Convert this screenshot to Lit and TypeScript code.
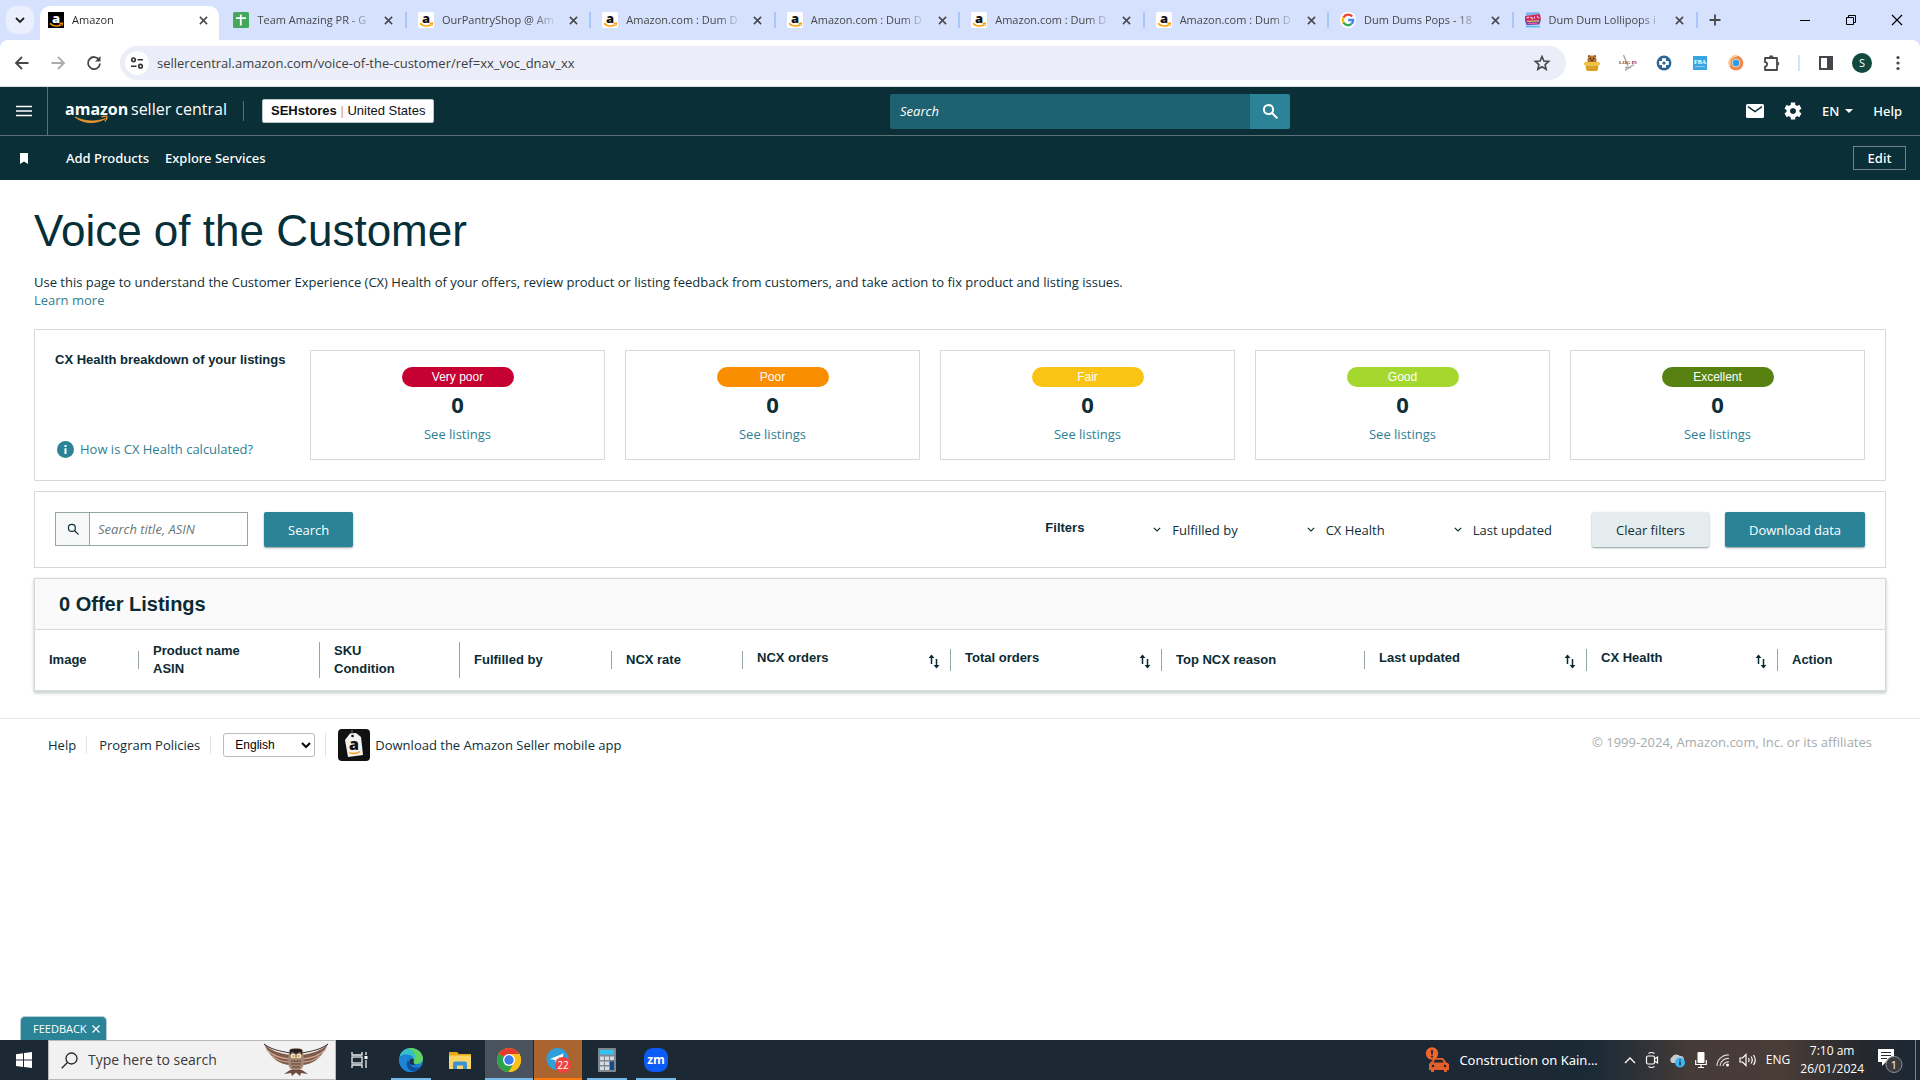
import { LitElement, html, css, svg, nothing } from "lit";
import { customElement, property } from "lit/decorators.js";
import { styleMap } from "lit/directives/style-map.js";

const icon = (w: number, h: number, body: unknown, box = `0 0 ${w} ${h}`) =>
  html`<svg class="icon" width=${w} height=${h} viewBox=${box} aria-hidden="true">${body}</svg>`;

const closeX = (s = 9) =>
  icon(s, s, svg`<path d="M1 1 9 9M9 1 1 9" fill="none" stroke="currentColor" stroke-width="1.7"/>`, "0 0 10 10");

const magnifier = (s: number, w = 2) =>
  icon(s, s, svg`<g fill="none" stroke="currentColor" stroke-width=${w}><circle cx="6.5" cy="6.5" r="4.6"/><path d="M10 10 15.4 15.4"/></g>`, "0 0 16 16");

const amazonFav = (dark: boolean) =>
  icon(16, 16, svg`
    <rect width="16" height="16" rx=${dark ? 0 : 2} fill=${dark ? "#000" : "#fff"}/>
    <text x="8" y="10.5" text-anchor="middle" font-family="Open Sans, sans-serif" font-weight="800" font-size="13" fill=${dark ? "#fff" : "#111"}>a</text>
    <path d="M2 11.4C5.5 14.6 10 14.6 13 12.6" fill="none" stroke="#f90" stroke-width="1.5"/>
    <path d="M11.6 11.4 14.6 11.2 13.8 14.2" fill="none" stroke="#f90" stroke-width="1.1"/>`);

const sheetsFav = icon(16, 16, svg`<rect width="16" height="16" rx="1.5" fill="#43a85b"/><path d="M7.8 2.5V13.5M3 6.2H13" stroke="#fff" stroke-width="1.8"/>`);

const googleFav = icon(16, 16, svg`
  <circle cx="8" cy="8" r="8" fill="#fff"/>
  <g fill="none" stroke-width="2.4">
    <path d="M12.1 4.5A5.2 5.2 0 0 0 3.5 5.4" stroke="#ea4335"/>
    <path d="M3.5 5.4A5.2 5.2 0 0 0 3.5 10.6" stroke="#fbbc05"/>
    <path d="M3.5 10.6A5.2 5.2 0 0 0 11.4 11.9" stroke="#34a853"/>
    <path d="M11.4 11.9A5 5 0 0 0 13.2 8H8.2" stroke="#4285f4"/>
  </g>`);

const candyFav = icon(16, 16, svg`
  <path d="M1 .5 14 0 15 3 1 4Z" fill="#7fb6e8"/>
  <path d="M0 4 15 2 16 8 0 9.5Z" fill="#d8285f"/>
  <path d="M1.500 5.600 4 5.400M5.500 5 8 7M9.500 4.500V6.500M12 4.200 14 6.400" stroke="#f6c6d8" stroke-width="1.100"/>
  <path d="M0 8.800 16 7.600 14.500 12.500 1.500 13.200Z" fill="#6a4fb0"/>
  <path d="M2 9.400 14 8.800" stroke="#f2b541" stroke-width="1.300"/>
  <path d="M3 11.400H12" stroke="#e85c9a" stroke-width="1.200"/>
  <path d="M1 14.600H15" stroke="#5cb7ee" stroke-width="1.600"/>`);

const extensionIcons = [
  icon(16, 16, svg`
    <circle cx="5.200" cy="1.400" r="1.300" fill="#9c5a1f"/><circle cx="10.800" cy="1.400" r="1.300" fill="#9c5a1f"/>
    <path d="M3.500 8V4.500A4.500 4 0 0 1 12.500 4.500V8Z" fill="#b87333"/>
    <circle cx="6.300" cy="3.800" r=".800" fill="#332211"/><circle cx="9.700" cy="3.800" r=".800" fill="#332211"/>
    <path d="M7 5.500H9" stroke="#332211"/>
    <rect x="0" y="7" width="16" height="3.400" rx="1.600" fill="#f0c040"/><path d="M1.400 10.400H14.600L13.800 14.500Q13.500 16 12 16H4Q2.500 16 2.200 14.500Z" fill="#d9a021"/>`),
  icon(16, 16, svg`<path d="M3.5 0 8 11M5 15.4 14 9.500M5 12.500H11" stroke="#a5a5a5" stroke-width="1.3" fill="none"/>
    <text x="8" y="8.500" text-anchor="middle" font-family="Liberation Serif, serif" font-weight="700" font-size="5" fill="#8e1f2b">LOG IN</text>`),
  icon(16, 16, svg`<circle cx="8" cy="8" r="7.4" fill="#2c6494"/><path d="M8 3.2V12.8M3.2 8H12.8" stroke="#fff" stroke-width="4"/><circle cx="8" cy="8" r="1.6" fill="#2c6494"/>`),
  icon(14, 14, svg`<rect width="14" height="14" fill="#39a5e0"/><text x="7" y="7.6" text-anchor="middle" font-family="Liberation Serif, serif" font-weight="700" font-size="6" fill="#fff">FBA</text><path d="M2 10.6H12" stroke="#8fd0f2"/>`, "0 0 14 14"),
  icon(16, 16, svg`<circle cx="8" cy="8" r="7.4" fill="#f08a4b"/><path d="M2 11A7 7 0 0 1 9 1" stroke="#f9c99a" stroke-width="2" fill="none"/><circle cx="8" cy="8" r="4" fill="#cfe8f8"/><circle cx="8" cy="8" r="3.2" fill="#2f9be0"/>`),
  icon(18, 18, svg`<path d="M2 4H14V16H2V12.400A2 2 0 0 0 2 8.200Z" fill="none" stroke="#46484b" stroke-width="1.800" stroke-linejoin="round"/><path d="M6 3.500A2.200 2.200 0 0 1 10.400 3.500ZM14.500 7.500A2.200 2.200 0 0 1 14.500 11.800Z" fill="#46484b"/>`),
];

const sortIcon = icon(12, 15, svg`
  <path d="M3.5 1.4V10M8.5 5V13.4" stroke="currentColor" stroke-width="1.5"/>
  <path d="M.6 4 3.5 .4 6.4 4ZM5.6 11 8.5 14.6 11.4 11Z" fill="currentColor"/>`);

const owl = icon(66, 34, svg`
  <path d="M1 1C8 8 16 10 27 12L28 22C17 22 8 16 1 1Z" fill="#7d5a4a"/>
  <path d="M65 1C58 8 50 10 39 12L38 22C49 22 58 16 65 1Z" fill="#7d5a4a"/>
  <path d="M4 7C11 14 19 15 27 16M9 13C15 18 21 19 27 19M62 7C55 14 47 15 39 16M57 13C51 18 45 19 39 19" stroke="#c9a08a" stroke-width="1.4" fill="none"/>
  <path d="M1 1C9 7 17 8 27 10M65 1C57 7 49 8 39 10" stroke="#3b2a26" stroke-width="1" fill="none"/>
  <path d="M26 8C26 4 40 4 40 8L41 18C41 25 37 28 33 28 29 28 25 25 25 18Z" fill="#a58672"/>
  <path d="M27 12C26 5 28 6 33 6S40 5 39 12L37 9 33 11 29 9Z" fill="#26201f"/>
  <path d="M28 18 38 18M28 21H38M29 24H37" stroke="#5c4236"/>
  <circle cx="30" cy="13" r="2.3" fill="#efe6d5"/><circle cx="36" cy="13" r="2.3" fill="#efe6d5"/>
  <circle cx="30.3" cy="13" r="1.1" fill="#caa21e"/><circle cx="35.7" cy="13" r="1.1" fill="#caa21e"/>
  <path d="M32 14H34L33 17Z" fill="#e0b52e"/>
  <path d="M27 27 21 31 28 30 29 33 33 29.5 37 33 38 30 45 31 39 27Z" fill="#6e4b3f"/>`);

const taskIcons = {
  view: icon(18, 18, svg`<g fill="none" stroke="#e9edf0" stroke-width="1.3"><path d="M1 1V4H11V1M1 17V14H11V17"/><rect x="1" y="6" width="10" height="6"/><path d="M15 1V4M15 9V17"/></g><rect x="13.5" y="5" width="3" height="3" fill="#fff"/>`),
  edge: icon(24, 24, svg`
    <circle cx="12" cy="12" r="12" fill="#1b7fd0"/>
    <path d="M.500 9C3-2.500 19-3 23.300 8 25 13.500 21 16 17.500 16 14.500 16 13.800 14.500 15 13 16.500 8 7 4 .500 9Z" fill="#37bfc9"/>
    <path d="M13 0C21 1 25.500 8 23.400 13 22 16 18 16.400 15.600 15.400 14 14 16 13 15 10.500 18 8 15 3 9 .500Z" fill="#5fd260"/>
    <path d="M0 12C1 6 9 5 13 8.500 9 8.500 7 12 8.500 16 10.500 21 16 22 21 19 17 25 8 25.500 4 21 1 18 0 15 0 12Z" fill="#1d83d4"/>
    <path d="M8.200 13C6.500 18 10 23.500 15 23.500 18 22.600 20.500 20.500 21.400 18.800 16 21 11 19 10.500 14Z" fill="#0d4f9e"/>
    <path d="M15 12.500C14 14 14 16 17 16 13.500 18 10.400 16.500 10.400 13.500 10.400 11 14 9.500 15 12.500Z" fill="#173150"/>`),
  files: icon(22, 18, svg`<path d="M0 1H8L10 3H22V18H0Z" fill="#e9a914"/><path d="M0 4.500H22V18H0Z" fill="#fbd667"/><path d="M4 18V12.500A2 2 0 0 1 6 10.500H16A2 2 0 0 1 18 12.500V18H14V14.500H8V18Z" fill="#3b93d6"/>`),
  chrome: icon(24, 24, svg`
    <circle cx="12" cy="12" r="12" fill="#fbc116"/>
    <path d="M12 12 1.600 6A12 12 0 0 1 22.400 6H12Z" fill="#e33b2e"/>
    <path d="M12 12 1.600 6A12 12 0 0 0 11.600 24L17.200 15Z" fill="#2ba24c"/>
    <path d="M12 6H22.400A12 12 0 0 1 11.600 24L17.200 15Z" fill="#fbc116"/>
    <circle cx="12" cy="12" r="6" fill="#fff"/><circle cx="12" cy="12" r="4.700" fill="#3b7ded"/>`),
  telegram: icon(26, 26, svg`
    <circle cx="12.500" cy="12" r="11" fill="#2da0dc"/>
    <path d="M5 12 18.500 6.500 16.500 17.500 12.500 14.500 10.500 16.500 10 13Z" fill="#fff"/><path d="M10 13 16 8.500 11.500 14 10.500 16.500Z" fill="#b9d9ec"/>
    <circle cx="18" cy="18" r="8" fill="#f0423e"/>
    <text x="18" y="21.600" text-anchor="middle" font-family="Open Sans, sans-serif" font-size="10" fill="#fff">22</text>`),
  calc: icon(18, 24, svg`
    <rect width="18" height="24" rx="1" fill="#7d8890"/><rect x="2" y="2" width="14" height="4.500" fill="#35c3f3"/>
    <g fill="#d6dbdf"><path d="M2 8.500h4v3.600H2zM7 8.500h4v3.600H7zM12 8.500h4v3.600h-4zM2 13.400h4V17H2zM7 13.400h4V17H7zM2 18.400h4V22H2zM7 18.400h4V22H7z"/></g><path d="M12 13.400h4V22h-4z" fill="#174a8c"/>`),
  zoom: icon(24, 24, svg`<rect width="24" height="24" rx="9" fill="#0b5cf5"/><text x="12" y="16" text-anchor="middle" font-family="Open Sans, sans-serif" font-weight="700" font-size="12" fill="#fff">zm</text>`),
};

const tray = {
  chevron: icon(12, 8, svg`<path d="M1 7 6 2 11 7" fill="none" stroke="#fff" stroke-width="1.300"/>`),
  meet: icon(14, 18, svg`<g fill="none" stroke="#fff" stroke-width="1.200"><rect x="1.500" y="5" width="8" height="8" rx="1.500"/><path d="M9.500 8 12.500 6V12L9.500 10M3.500 2.500Q6.500.500 9.500 2.500M3.500 15.500Q6.500 17.500 9.500 15.500"/></g>`),
  cloud: icon(18, 16, svg`<path d="M4 11A3.500 3.500 0 0 1 4 5 5 5 0 0 1 12 4 3.500 3.500 0 0 1 13 11Z" fill="#c8cbce"/><circle cx="12" cy="10.500" r="5" fill="#3fb5f2"/><path d="M12 7.400V8.700M12 9.800V13.400" stroke="#123" stroke-width="1.400"/>`),
  mic: icon(12, 18, svg`<rect x="2.500" y="1" width="7" height="11" rx="1" fill="#fff"/><path d="M.700 9V13.500H11.300V9M6 13.500V16.500M3 16.500H9" fill="none" stroke="#fff" stroke-width="1.200"/>`),
  wifi: icon(14, 14, svg`<g fill="none" stroke="#d6d6d6" stroke-width="1.200"><path d="M1 13A11 11 0 0 1 13 2M4 13A8 8 0 0 1 13 5.500M7 13A5 5 0 0 1 13 9"/></g><circle cx="11.500" cy="12" r="1.500" fill="#fff"/>`),
  speaker: icon(18, 14, svg`<g fill="none" stroke="#fff" stroke-width="1.200"><path d="M1 5H3.500L7 1.500V12.500L3.500 9H1ZM9.500 5Q11 7 9.500 9M12 3.500Q14.500 7 12 10.500M14.500 2Q18 7 14.500 12"/></g>`),
};

interface Health { label: string; color: string; count: number }
interface Column { lines: string[]; width: number; sortable?: boolean }

const uiFont = css`"Open Sans", "Noto Sans", sans-serif`;

const shared = css`
  * { box-sizing: border-box; }
  .icon { display: block; flex: none; overflow: visible; }
  button { font: inherit; color: inherit; background: none; border: 0; padding: 0; cursor: pointer; }
  input { font: inherit; border: 0; outline: 0; min-width: 0; }
  a { text-decoration: none; color: inherit; }
`;

@customElement("browser-chrome")
export class BrowserChrome extends LitElement {
  static styles = [shared, css`
    :host { display: block; font: 11px/16px ${uiFont}; color: #45474a; background: #d6e2fd; }
    .strip { display: flex; height: 40px; padding-left: 6px; }
    .menu { width: 28px; height: 28px; margin-top: 6px; border-radius: 10px; background: #e9effd; display: grid; place-items: center; color: #1f1f1f; }
    .tabs { display: grid; grid-auto-flow: column; grid-auto-columns: minmax(0, 1fr); flex: 0 1 1660px; min-width: 0; margin-left: 4px; }
    .tab { display: flex; align-items: center; gap: 8px; padding: 0 10px 6px 11px; margin-top: 6px; }
    .tab::after { content: ""; width: 2px; height: 16px; background: #a8c7fa; margin: 0 -10px 0 0; }
    .tab.active::after { display: none; }
    .tab.active { background: #fff; border-radius: 10px 10px 0 0; margin-left: 2px; margin-right: 3px; padding-right: 8px; padding-left: 8px; }
    .title { flex: 1; min-width: 0; text-align: left; white-space: nowrap; overflow: hidden; mask-image: linear-gradient(to right, #000 calc(100% - 24px), transparent); }
    .active .title { color: #2b2d30; }
    .close { width: 16px; height: 16px; display: grid; place-items: center; }
    .new { margin: 0 0 0 11px; }
    .window { margin-left: auto; display: flex; align-items: center; gap: 36px; padding-right: 18px; color: #000; }
    .bar { display: flex; align-items: center; height: 47px; background: #fff; border-bottom: 1px solid #dadce0; border-radius: 8px 8px 0 0; padding: 0 4px 0 14px; }
    .nav { display: flex; gap: 20px; margin-right: 18px; }
    .nav .off { color: #a9abae; }
    .omni { flex: 1; display: flex; align-items: center; height: 34px; border-radius: 17px; background: #ebeef8; padding: 0 16px 0 5px; }
    .info { width: 24px; height: 24px; border-radius: 12px; background: #fff; display: grid; place-items: center; }
    .url { flex: 1; background: none; font-size: 13px; color: #3c4043; padding: 0 8px; }
    .exts { display: flex; margin-left: 8px; }
    .exts.own { margin-left: 0; }
    .exts button { width: 36px; height: 24px; display: grid; place-items: center; }
    .split { width: 2px; height: 16px; background: #d3e3fd; margin: 0 8px; }
    .avatar { width: 20px; height: 20px; border-radius: 10px; background: #12493f; color: #fff; display: grid; place-items: center; }
  `];

  private tabs = [
    { title: "Amazon", fav: amazonFav(true) },
    { title: "Team Amazing PR - G", fav: sheetsFav },
    { title: "OurPantryShop @ Am", fav: amazonFav(false) },
    { title: "Amazon.com : Dum D", fav: amazonFav(false) },
    { title: "Amazon.com : Dum D", fav: amazonFav(false) },
    { title: "Amazon.com : Dum D", fav: amazonFav(false) },
    { title: "Amazon.com : Dum D", fav: amazonFav(false) },
    { title: "Dum Dums Pops - 18", fav: googleFav },
    { title: "Dum Dum Lollipops i", fav: candyFav },
  ];

  render() {
    return html`
      <div class="strip">
        <button class="menu" aria-label="Search tabs">${icon(10, 6, svg`<path d="M1 1 5 5 9 1" fill="none" stroke="currentColor" stroke-width="1.800"/>`)}</button>
        <div class="tabs">
          ${this.tabs.map((t, i) => html`
            <div class="tab ${i === 0 ? "active" : ""}">
              ${t.fav}<button class="title">${t.title}</button>
              <button class="close" aria-label="Close tab">${closeX()}</button>
            </div>`)}
        </div>
        <button class="new" aria-label="New tab">${icon(12, 12, svg`<path d="M6 .500V11.500M.500 6H11.500" stroke="currentColor" stroke-width="1.800"/>`)}</button>
        <div class="window">
          <button aria-label="Minimize">${icon(10, 10, svg`<path d="M0 5.500H10" stroke="currentColor"/>`)}</button>
          <button aria-label="Restore">${icon(10, 10, svg`<path d="M.500 2.500H7.500V9.500H.500ZM2.500 2.500V.500H9.500V7.500H7.500" fill="none" stroke="currentColor"/>`)}</button>
          <button aria-label="Close window">${icon(10, 10, svg`<path d="M0 0 10 10M10 0 0 10" stroke="currentColor" stroke-width="1.200"/>`)}</button>
        </div>
      </div>
      <div class="bar">
        <div class="nav">
          <button aria-label="Back">${icon(16, 16, svg`<path d="M8 2 2 8 8 14M2 8H14.500" fill="none" stroke="currentColor" stroke-width="1.800"/>`)}</button>
          <button class="off" aria-label="Forward">${icon(16, 16, svg`<path d="M8 2 14 8 8 14M14 8H1.500" fill="none" stroke="currentColor" stroke-width="1.800"/>`)}</button>
          <button aria-label="Reload">${icon(16, 16, svg`<path d="M13.200 5A6 6 0 1 0 14 8.500" fill="none" stroke="currentColor" stroke-width="1.800"/><path d="M14.500 1V6.500H9Z" fill="currentColor"/>`)}</button>
        </div>
        <div class="omni">
          <button class="info" aria-label="Site information">${icon(14, 12, svg`<g fill="none" stroke="#303234" stroke-width="1.600"><circle cx="3.500" cy="2.800" r="1.800"/><path d="M7.500 2.800H13M1 9.200H6.500"/><circle cx="10.500" cy="9.200" r="1.800"/></g>`)}</button>
          <input class="url" aria-label="Address" .value=${"sellercentral.amazon.com/voice-of-the-customer/ref=xx_voc_dnav_xx"} />
          <button aria-label="Bookmark">${icon(16, 16, svg`<path d="M8 1.500 9.900 6 14.700 6.400 11.100 9.600 12.200 14.300 8 11.800 3.800 14.300 4.900 9.600 1.300 6.400 6.100 6Z" fill="none" stroke="currentColor" stroke-width="1.600"/>`)}</button>
        </div>
        <div class="exts">${extensionIcons.map((e) => html`<button aria-label="Extension">${e}</button>`)}</div>
        <div class="split"></div>
        <div class="exts own">
          <button aria-label="Side panel">${icon(14, 14, svg`<path d="M1 1H13V13H1Z" fill="none" stroke="currentColor" stroke-width="2"/><path d="M8 1H13V13H8Z" fill="currentColor"/>`)}</button>
          <button aria-label="Profile"><span class="avatar">S</span></button>
          <button aria-label="Menu">${icon(4, 16, svg`<g fill="currentColor"><circle cx="2" cy="2.500" r="1.600"/><circle cx="2" cy="8" r="1.600"/><circle cx="2" cy="13.500" r="1.600"/></g>`)}</button>
        </div>
      </div>`;
  }
}

@customElement("seller-nav")
export class SellerNav extends LitElement {
  static styles = [shared, css`
    :host { display: block; background: #0a2f36; color: #fff; font: 500 13px/18px "Noto Sans", sans-serif; }
    .row { display: grid; grid-template-columns: minmax(0, 89fr) minmax(200px, 400px) minmax(0, 63fr); align-items: center; height: 49px; border-bottom: 1px solid #5b7175; }
    .left, .right { display: flex; align-items: center; }
    .burger { width: 48px; height: 48px; border-right: 1px solid #5b7175; display: grid; place-items: center; }
    .logo { display: block; margin-left: 18px; }
    .rule { width: 1px; height: 20px; margin: 0 18px 0 17px; background: #5b7175; }
    .store { background: #fff; color: #0f1111; border: 1px solid #b9c4c6; border-radius: 2px; height: 24px; padding: 0 8px; font: 13px/20px "Liberation Sans", sans-serif; white-space: nowrap; }
    .bar { color: #d9a066; }
    .search { display: flex; height: 35px; }
    .field { flex: 1; background: #1e6170; color: #fff; padding: 0 10px; font: italic 13px/18px ${uiFont}; border-radius: 2px 0 0 2px; }
    .field::placeholder { color: #fff; opacity: 1; }
    .go { width: 40px; background: #2a8397; border-radius: 0 2px 2px 0; display: grid; place-items: center; }
    .right { justify-content: flex-end; gap: 20px; padding-right: 18px; }
    .lang { display: flex; align-items: center; gap: 6px; }
    .sub { display: flex; align-items: center; height: 44px; padding: 0 14px 0 20px; }
    .links { display: flex; gap: 16px; margin-left: 38px; }
    .edit { margin-left: auto; width: 53px; height: 24px; border: 1px solid #6f8286; }
  `];

  render() {
    return html`
      <div class="row">
        <div class="left">
          <button class="burger" aria-label="Menu">${icon(16, 12, svg`<path d="M0 1.500H16M0 6H16M0 10.500H16" stroke="#fff" stroke-width="1.600"/>`)}</button>
          <a class="logo" href="#" aria-label="amazon seller central">${icon(160, 26, svg`
            <text x="-1" y="17" font-family="Open Sans, sans-serif" font-weight="700" font-size="16" fill="#fff">amazon</text>
            <text x="65" y="17" font-family="Open Sans, sans-serif" font-weight="400" font-size="16" fill="#fff">seller central</text>
            <path d="M9 19C18 26.500 31 26 39.500 20.500 31 24 19 24 9 19Z" fill="#f0982e" stroke="#f0982e" stroke-width=".800"/>
            <path d="M35.500 18.800C38 18 40.500 18 41 18.600 41.300 20 40.300 22.200 38.800 23.600" fill="none" stroke="#f0982e" stroke-width="1.300"/>`)}</a>
          <span class="rule"></span>
          <button class="store"><b>SEHstores</b> <span class="bar">|</span> United States</button>
        </div>
        <form class="search" @submit=${(e: Event) => e.preventDefault()}>
          <input class="field" placeholder="Search" aria-label="Search" />
          <button class="go" aria-label="Search">${magnifier(16, 2)}</button>
        </form>
        <div class="right">
          <a href="#" aria-label="Messages">${icon(18, 14, svg`<rect width="18" height="14" rx="1.500" fill="#fff"/><path d="M2 2.600 9 7.600 16 2.600" fill="none" stroke="#0a2f36" stroke-width="1.500"/>`)}</a>
          <a href="#" aria-label="Settings">${icon(18, 18, svg`
            <circle cx="9" cy="9" r="4.600" fill="none" stroke="#fff" stroke-width="4"/>
            <g stroke="#fff" stroke-width="4.400"><path d="M9 .500V4M9 14V17.500M1.600 4.800 4.700 6.500M13.300 11.500 16.400 13.200M1.600 13.200 4.700 11.500M13.300 6.500 16.400 4.800"/></g><circle cx="9" cy="9" r="2.800" fill="#0a2f36"/>`)}</a>
          <button class="lang">EN ${icon(8, 4, svg`<path d="M0 0H8L4 4Z" fill="#fff"/>`)}</button>
          <a href="#">Help</a>
        </div>
      </div>
      <div class="sub">
        ${icon(8, 11, svg`<path d="M0 0H8V11L4 8.500 0 11Z" fill="#fff"/>`)}
        <nav class="links"><a href="#">Add Products</a><a href="#">Explore Services</a></nav>
        <button class="edit">Edit</button>
      </div>`;
  }
}

@customElement("health-card")
export class HealthCard extends LitElement {
  static styles = [shared, css`
    :host { display: flex; flex-direction: column; align-items: center; border: 1px solid #d5dbdb; padding: 16px 0 15px; }
    .pill { width: 112px; border-radius: 10px; color: #fff; text-align: center; font: 12px/20px "Liberation Sans", sans-serif; }
    .count { font-size: 22px; line-height: 24px; font-weight: 700; margin: 5px 0 8px; }
    .see { color: #2f7f93; line-height: 20px; }
  `];
  @property({ attribute: false }) data!: Health;

  render() {
    return html`
      <span class="pill" style=${styleMap({ background: this.data.color })}>${this.data.label}</span>
      <span class="count">${this.data.count}</span>
      <a class="see" href="#">See listings</a>`;
  }
}

@customElement("voice-page")
export class VoicePage extends LitElement {
  static styles = [shared, css`
    :host { display: block; font: 13px/18px ${uiFont}; color: #0f2f38; }
    .body { padding: 0 34px; }
    h1 { margin: 0; padding: 24px 0 15px; font: 400 44px/54px "Liberation Sans", sans-serif; color: #062f38; }
    p { margin: 0; }
    .link { color: #2f7f93; }
    .panel { border: 1px solid #d5dbdb; padding: 20px; margin-top: 10px; }
    .breakdown { display: flex; margin-top: 20px; }
    .side { flex: 0 0 255px; display: flex; flex-direction: column; justify-content: space-between; padding-bottom: 2px; }
    h2 { margin: 0; font: 700 13px/20px "Liberation Sans", sans-serif; color: #0b2b34; }
    .how { display: flex; align-items: center; gap: 6px; padding-left: 2px; }
    .cards { flex: 1; display: grid; grid-template-columns: repeat(5, minmax(0, 1fr)); gap: 20px; }
    .tools { display: flex; align-items: center; }
    .find { display: flex; gap: 16px; align-items: flex-start; height: 35px; }
    .box { display: flex; width: 193px; height: 34px; border: 1px solid #95a5a6; }
    .lens { width: 34px; display: grid; place-items: center; background: #f7f8f8; border-right: 1px solid #95a5a6; }
    .asin { flex: 1; padding: 0 8px; font-style: italic; background: #fff; }
    .asin::placeholder { color: #687778; opacity: 1; }
    .btn { height: 35px; border-radius: 2px; padding: 0 24px; background: #2a8397; color: #fff; font-weight: 500; box-shadow: 0 1px 2px #8a9a9d; white-space: nowrap; }
    .btn.light { background: #e5ecee; color: #0f2f38; font-weight: 400; }
    .filters { margin-left: auto; display: flex; align-items: center; gap: 69px; }
    .filters h2 { padding-bottom: 3px; }
    .drop { display: flex; align-items: center; gap: 11px; }
    .actions { display: flex; gap: 16px; margin-left: 40px; }
    .listing { border: 1px solid #d5dbdb; border-bottom-width: 2px; margin-top: 10px; box-shadow: 0 1px 3px #b8c0c0; }
    .listing h2 { font-size: 20px; line-height: 24px; padding: 13px 24px; background: #fafafa; border-bottom: 1px solid #d5dbdb; }
    table { width: 100%; table-layout: fixed; border-collapse: collapse; }
    th { height: 60px; padding: 0; text-align: left; vertical-align: middle; font: 700 13px/18px "Liberation Sans", sans-serif; color: #0b2b34; }
    .cell { display: flex; justify-content: space-between; padding: 0 10px 0 14px; border-right: 1px solid #95a5a6; }
    .cell.sort { height: 22px; }
    .sort button { padding-top: 2px; height: 22px; }
    th:last-child .cell { border-right: 0; }
    footer { margin-top: 26px; border-top: 1px solid #e7e9e9; padding: 10px 48px; display: flex; align-items: center; }
    .item { padding-right: 10px; border-right: 1px solid #e2e5e5; margin-right: 12px; white-space: nowrap; }
    select { width: 92px; height: 24px; padding: 0 0 0 7px; border: 1px solid #b9bdbd; border-radius: 3px; background: #fff; color: #000; font: 12px "Liberation Sans", sans-serif; }
    .app { display: flex; align-items: center; gap: 5px; }
    .copy { margin-left: auto; color: #a6abab; padding-bottom: 6px; }
  `];

  private health: Health[] = [
    { label: "Very poor", color: "#c60032", count: 0 },
    { label: "Poor", color: "#f98e00", count: 0 },
    { label: "Fair", color: "#f9c414", count: 0 },
    { label: "Good", color: "#a5d82f", count: 0 },
    { label: "Excellent", color: "#578211", count: 0 },
  ];

  private columns: Column[] = [
    { lines: ["Image"], width: 104 },
    { lines: ["Product name", "ASIN"], width: 181 },
    { lines: ["SKU", "Condition"], width: 140 },
    { lines: ["Fulfilled by"], width: 152 },
    { lines: ["NCX rate"], width: 131 },
    { lines: ["NCX orders"], width: 208, sortable: true },
    { lines: ["Total orders"], width: 211, sortable: true },
    { lines: ["Top NCX reason"], width: 203 },
    { lines: ["Last updated"], width: 222, sortable: true },
    { lines: ["CX Health"], width: 191, sortable: true },
    { lines: ["Action"], width: 107 },
  ];

  render() {
    const total = this.columns.reduce((sum, c) => sum + c.width, 0);
    return html`
      <div class="body">
        <h1>Voice of the Customer</h1>
        <p>Use this page to understand the Customer Experience (CX) Health of your offers, review product or listing feedback from customers, and take action to fix product and listing issues.</p>
        <a class="link" href="#">Learn more</a>

        <section class="panel breakdown">
          <div class="side">
            <h2>CX Health breakdown of your listings</h2>
            <a class="link how" href="#">${icon(17, 17, svg`<circle cx="8.500" cy="8.500" r="8.500" fill="#2a8397"/><path d="M8.500 4V6M8.500 7.300V13" stroke="#fff" stroke-width="2"/>`)}How is CX Health calculated?</a>
          </div>
          <div class="cards">${this.health.map((h) => html`<health-card .data=${h}></health-card>`)}</div>
        </section>

        <section class="panel tools">
          <form class="find" @submit=${(e: Event) => e.preventDefault()}>
            <div class="box">
              <label class="lens" for="asin" aria-label="Search listings">${magnifier(12, 1.6)}</label>
              <input class="asin" id="asin" placeholder="Search title, ASIN" />
            </div>
            <button class="btn">Search</button>
          </form>
          <div class="filters">
            <h2>Filters</h2>
            ${["Fulfilled by", "CX Health", "Last updated"].map((f) => html`
              <button class="drop">${icon(8, 5, svg`<path d="M.800.800 4 4 7.200.800" fill="none" stroke="#0f2f38" stroke-width="1.200"/>`)}${f}</button>`)}
          </div>
          <div class="actions">
            <button class="btn light">Clear filters</button>
            <button class="btn">Download data</button>
          </div>
        </section>

        <section class="listing">
          <h2>0 Offer Listings</h2>
          <table>
            <colgroup>${this.columns.map((c) => html`<col style=${styleMap({ width: `${(c.width / total) * 100}%` })} />`)}</colgroup>
            <thead><tr>${this.columns.map((c) => html`
              <th scope="col"><div class="cell ${c.sortable ? "sort" : ""}">
                <span>${c.lines.map((l, i) => html`${i ? html`<br />` : nothing}${l}`)}</span>
                ${c.sortable ? html`<button aria-label="Sort by ${c.lines[0]}">${sortIcon}</button>` : nothing}
              </div></th>`)}</tr></thead>
          </table>
        </section>
      </div>

      <footer>
        <a class="item" href="#">Help</a>
        <a class="item" href="#">Program Policies</a>
        <span class="item"><select aria-label="Language"><option>English</option></select></span>
        <a class="app" href="#">${icon(32, 32, svg`
          <rect width="32" height="32" rx="4" fill="#111"/>
          <path d="M14 1V5" stroke="#777"/>
          <path d="M7 11 12 4.500 18 4 23 8 25 26 10 28Z" fill="#f3f3f3"/><circle cx="14.500" cy="7" r="1.300" fill="#111"/>
          <text x="16" y="21" text-anchor="middle" font-family="Open Sans, sans-serif" font-weight="800" font-size="16" fill="#111">a</text>
          <path d="M11.500 23.600Q17 26 22 22.500" stroke="#f90" stroke-width="1.500" fill="none"/>`)}Download the Amazon Seller mobile app</a>
        <span class="copy">© 1999-2024, Amazon.com, Inc. or its affiliates</span>
      </footer>`;
  }
}

@customElement("task-bar")
export class TaskBar extends LitElement {
  static styles = [shared, css`
    :host { display: flex; height: 40px; color: #fff; font: 14px/20px ${uiFont}; background: linear-gradient(to right, #1c2834 0 80%, #1b2a37 83%, #453b38 88%, #483c37 93%, #26282e 97%, #1c2834); }
    .start { width: 48px; display: grid; place-items: center; }
    .find { display: flex; align-items: center; width: 288px; background: #f1f1f1; border: 1px solid #b9b9b9; padding: 0 6px 0 12px; color: #1b1b1b; }
    .field { flex: 1; background: none; padding: 0 10px; }
    .field::placeholder { color: #3a3a3a; opacity: 1; }
    .apps { display: flex; gap: 1px; }
    .app { width: 48px; display: grid; place-items: center; border-bottom: 2px solid transparent; border-top: 2px solid transparent; }
    .app:first-child { margin-right: 2px; }
    .open { background: linear-gradient(#76b9ed, #76b9ed) center bottom / 40px 2px no-repeat border-box; }
    .active { background: #4a525e; border-bottom-color: #76b9ed; }
    .alert { background: #a9642f; border-bottom-color: #ff7a0a; }
    .active, .alert { border-top: 0; padding-top: 2px; }
    .tray { margin-left: auto; display: flex; align-items: center; white-space: nowrap; }
    .news { display: flex; align-items: center; gap: 8px; margin-right: 26px; font: 13px/20px "Noto Sans", sans-serif; }
    .icons { display: flex; align-items: center; gap: 9px; font-size: 12px; }
    .clock { text-align: center; font-size: 12px; line-height: 18px; margin: 0 13px 0 10px; }
    .peek { width: 5px; height: 40px; border-left: 1px solid #7b8086; margin-left: 12px; }
  `];

  private apps = [
    { name: "Task view", art: taskIcons.view, state: "" },
    { name: "Microsoft Edge", art: taskIcons.edge, state: "open" },
    { name: "File Explorer", art: taskIcons.files, state: "" },
    { name: "Google Chrome", art: taskIcons.chrome, state: "active" },
    { name: "Telegram", art: taskIcons.telegram, state: "alert" },
    { name: "Calculator", art: taskIcons.calc, state: "open" },
    { name: "Zoom", art: taskIcons.zoom, state: "open" },
  ];

  render() {
    return html`
      <button class="start" aria-label="Start">${icon(16, 16, svg`<path d="M0 2.200 7 1.200V7.600H0ZM8 1 16 0V7.600H8ZM0 8.500H7V14.900L0 13.900ZM8 8.500H16V16L8 15Z" fill="#fff"/>`)}</button>
      <div class="find">
        ${icon(17, 17, svg`<g fill="none" stroke="#222" stroke-width="1.300"><circle cx="10.500" cy="6.500" r="5.500"/><path d="M6.500 10.500.700 16.300"/></g>`)}
        <input class="field" placeholder="Type here to search" aria-label="Type here to search" />
        ${owl}
      </div>
      <div class="apps">${this.apps.map((a) => html`<button class="app ${a.state}" aria-label=${a.name}>${a.art}</button>`)}</div>
      <div class="tray">
        <button class="news">${icon(26, 26, svg`
          <path d="M6 15 9 11H18L21 15 24 17V23H22V25H19V23H9V25H6V23H4V17Z" fill="#e4602b"/><path d="M8.500 15.500 10 12.800H17L18.800 15.500Z" fill="#1c2834"/>
          <circle cx="7" cy="6.500" r="6.200" fill="#f0652e"/><path d="M7 3V7.500M7 8.800V10.600" stroke="#1c2834" stroke-width="1.800"/>
          <circle cx="8" cy="19" r="1.300" fill="#1c2834"/><circle cx="20" cy="19" r="1.300" fill="#1c2834"/>`)}Construction on Kain...</button>
        <div class="icons">
          ${tray.chevron}${tray.meet}${tray.cloud}${tray.mic}${tray.wifi}${tray.speaker}<span>ENG</span>
        </div>
        <div class="clock">7:10 am<br />26/01/2024</div>
        <button aria-label="Notifications">${icon(26, 26, svg`
          <path d="M1 2H17V15H9L5 19V15H1Z" fill="#fff"/><path d="M4 5.500H14M4 8.500H14M4 11.500H10" stroke="#2a2c31" stroke-width="1.200"/>
          <circle cx="17" cy="17.500" r="8" fill="#3a3c41" stroke="#8b8e92"/>
          <text x="17" y="21.500" text-anchor="middle" font-family="Open Sans, sans-serif" font-size="11" fill="#fff">1</text>`)}</button>
        <span class="peek"></span>
      </div>`;
  }
}

@customElement("app-root")
export class AppRoot extends LitElement {
  static styles = [shared, css`
    :host { display: flex; flex-direction: column; min-height: 100vh; background: #fff; }
    .page { flex: 1; }
    .dock { position: relative; }
    .feedback { position: absolute; left: 20px; bottom: 100%; height: 24px; display: flex; align-items: center; gap: 5px; padding: 0 6px 0 12px; color: #fff; background: #2a8397; border: 1px solid #b5cdd2; border-bottom: 0; border-radius: 5px 5px 0 0; font: 500 11px/16px ${uiFont}; }
  `];

  render() {
    return html`
      <browser-chrome></browser-chrome>
      <seller-nav></seller-nav>
      <voice-page class="page"></voice-page>
      <div class="dock">
        <button class="feedback">FEEDBACK ${icon(8, 8, svg`<path d="M.500.500 7.500 7.500M7.500.500.500 7.500" stroke="#fff" stroke-width="1.200"/>`)}</button>
        <task-bar></task-bar>
      </div>`;
  }
}
